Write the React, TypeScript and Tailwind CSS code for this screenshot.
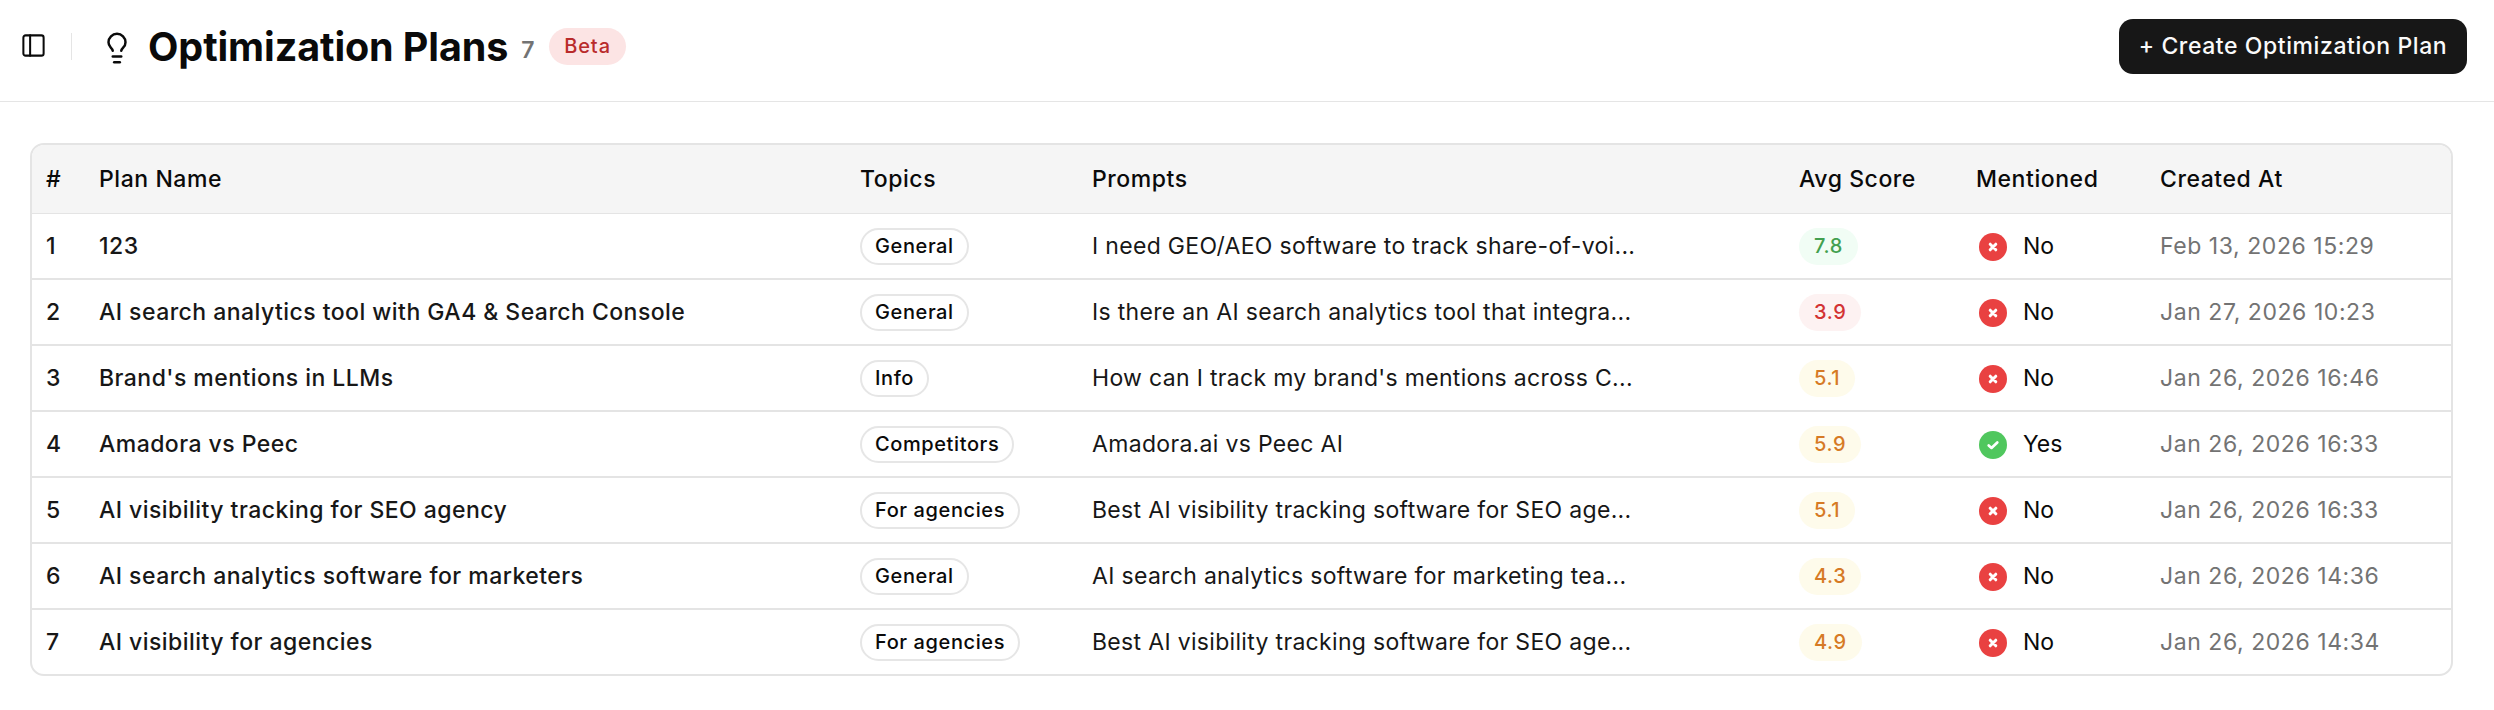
type Tone = "green" | "red" | "amber";

interface Plan {
  name: string;
  topic: string;
  prompt: string;
  score: string;
  tone: Tone;
  mentioned: boolean;
  createdAt: string;
}

const plans: Plan[] = [
  { name: "123", topic: "General", prompt: "I need GEO/AEO software to track share-of-voi...", score: "7.8", tone: "green", mentioned: false, createdAt: "Feb 13, 2026 15:29" },
  { name: "AI search analytics tool with GA4 & Search Console", topic: "General", prompt: "Is there an AI search analytics tool that integra...", score: "3.9", tone: "red", mentioned: false, createdAt: "Jan 27, 2026 10:23" },
  { name: "Brand's mentions in LLMs", topic: "Info", prompt: "How can I track my brand's mentions across C...", score: "5.1", tone: "amber", mentioned: false, createdAt: "Jan 26, 2026 16:46" },
  { name: "Amadora vs Peec", topic: "Competitors", prompt: "Amadora.ai vs Peec AI", score: "5.9", tone: "amber", mentioned: true, createdAt: "Jan 26, 2026 16:33" },
  { name: "AI visibility tracking for SEO agency", topic: "For agencies", prompt: "Best AI visibility tracking software for SEO age...", score: "5.1", tone: "amber", mentioned: false, createdAt: "Jan 26, 2026 16:33" },
  { name: "AI search analytics software for marketers", topic: "General", prompt: "AI search analytics software for marketing tea...", score: "4.3", tone: "amber", mentioned: false, createdAt: "Jan 26, 2026 14:36" },
  { name: "AI visibility for agencies", topic: "For agencies", prompt: "Best AI visibility tracking software for SEO age...", score: "4.9", tone: "amber", mentioned: false, createdAt: "Jan 26, 2026 14:34" },
];

const toneClasses: Record<Tone, string> = {
  green: "bg-[#f1fdf5] text-[#43a04f]",
  red: "bg-[#fdf2f2] text-[#d33434]",
  amber: "bg-[#fefbeb] text-[#d67a25]",
};

const columns = "grid grid-cols-[53px_761px_232px_707px_177px_184px_1fr] items-center";

function PanelIcon() {
  return (
    <svg className="mb-[2px] size-[27px] shrink-0" viewBox="0 0 24 24" fill="none" stroke="currentColor" strokeWidth="1.8" strokeLinecap="round" strokeLinejoin="round">
      <rect x="3" y="3" width="18" height="18" rx="2" />
      <path d="M9 3v18" />
    </svg>
  );
}

function BulbIcon() {
  return (
    <svg className="mt-[2px] size-[34px] shrink-0" viewBox="0 0 24 24" fill="none" stroke="currentColor" strokeWidth="1.75" strokeLinecap="round" strokeLinejoin="round">
      <path d="M15 14c.2-1 .7-1.7 1.5-2.5 1-.9 1.5-2.2 1.5-3.5A6 6 0 0 0 6 8c0 1 .2 2.2 1.5 3.5.7.7 1.3 1.5 1.5 2.5" />
      <path d="M9 18h6" />
      <path d="M10 22h4" />
    </svg>
  );
}

function MentionIcon({ yes }: { yes: boolean }) {
  return (
    <svg className="size-7 shrink-0" viewBox="0 0 28 28" fill="none" stroke="#fff" strokeLinejoin="round">
      <circle cx="14" cy="14" r="14" stroke="none" fill={yes ? "#50c75e" : "#e94141"} />
      {yes ? (
        <path d="M9.7 14.4l2.8 2.5 5.8-5.5" strokeWidth="2.7" strokeLinecap="round" />
      ) : (
        <path d="M11.2 11.2l5.6 5.6M16.8 11.2l-5.6 5.6" strokeWidth="3" strokeLinecap="round" />
      )}
    </svg>
  );
}

export default function App() {
  return (
    <div className="h-[710px] w-full overflow-hidden bg-white font-['Inter','Liberation_Sans',sans-serif] text-[23px] leading-7 whitespace-nowrap text-[#0a0a0a]">
      <header className="flex h-[102px] items-start border-b border-[#e5e5e5] pt-[19px] pr-[27px] pl-5">
        <div className="flex h-[55px] flex-1 items-center">
          <PanelIcon />
          <div className="ml-6 h-[27px] w-px bg-[#e5e5e5]" />
          <div className="ml-[28px]">
            <BulbIcon />
          </div>
          <h1 className="ml-[14px] pt-[2px] text-[39.5px] leading-[55px] font-bold tracking-[-0.1px]">Optimization Plans</h1>
          <span className="ml-[13px] pt-[7px] font-semibold text-[#737373]">7</span>
          <span className="ml-[14px] flex h-[37px] w-[77px] items-center justify-center rounded-full bg-[#fce4e4] pb-[2px] pl-px text-[20px] font-medium tracking-[0.9px] text-[#b92b2b]">
            Beta
          </span>
        </div>
        <button className="flex h-[55px] w-[348px] items-center justify-center rounded-[14px] bg-[#171717] pb-px font-medium tracking-[0.58px] text-[#fafafa]">
          + Create Optimization Plan
        </button>
      </header>

      <main className="pt-[41px] pr-[41px] pl-[30px]">
        <div className="overflow-hidden rounded-[14px] border-2 border-[#e4e4e4]">
          <div className={`${columns} h-[69px] border-b border-[#e4e4e4] bg-[#f5f5f5] font-medium tracking-[0.56px] [&>*]:pl-[14px]`}>
            <div>#</div>
            <div>Plan Name</div>
            <div>Topics</div>
            <div>Prompts</div>
            <div>Avg Score</div>
            <div>Mentioned</div>
            <div>Created At</div>
          </div>
          <div className="divide-y-2 divide-[#e4e4e4]">
            {plans.map((plan, i) => (
              <div key={i} className="h-[66px] last:h-[64px]">
                <div className={`${columns} h-16 [&>*]:pl-[14px]`}>
                  <div className="font-medium text-[#171717]">{i + 1}</div>
                  <div className="font-medium tracking-[0.46px] text-[#171717]">{plan.name}</div>
                  <div className="flex">
                    <span className="flex h-[37px] items-center rounded-full border-2 border-[#e6e6e6] px-[13px] pb-px text-[20px] font-medium tracking-[0.6px]">
                      {plan.topic}
                    </span>
                  </div>
                  <div className="tracking-[0.32px] text-[#171717]">{plan.prompt}</div>
                  <div className="flex">
                    <span className={`flex h-[37px] items-center rounded-full px-[15px] pb-px text-[20px] font-medium tracking-[0.6px] ${toneClasses[plan.tone]}`}>
                      {plan.score}
                    </span>
                  </div>
                  <div className="flex items-center">
                    <div className="ml-[3px] pt-[2px]">
                      <MentionIcon yes={plan.mentioned} />
                    </div>
                    <span className="ml-4">{plan.mentioned ? "Yes" : "No"}</span>
                  </div>
                  <div className="tracking-[0.56px] text-[#737373]">{plan.createdAt}</div>
                </div>
              </div>
            ))}
          </div>
        </div>
      </main>
    </div>
  );
}
